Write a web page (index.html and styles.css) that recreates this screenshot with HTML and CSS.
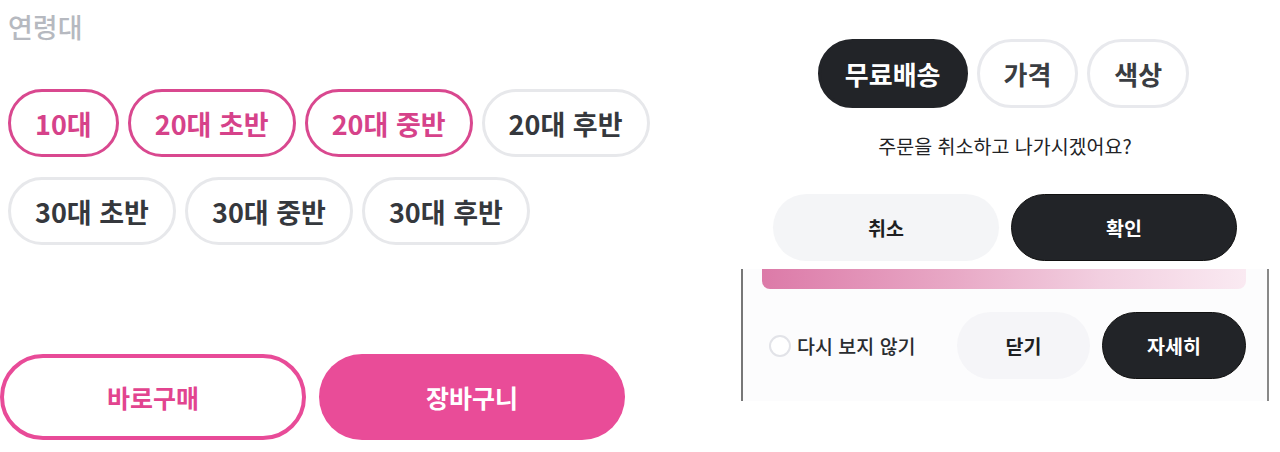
FILE: index.html
```html
<!DOCTYPE html>
<html lang="ko">
<head>
<meta charset="utf-8">
<title>UI</title>
<link rel="stylesheet" href="styles.css">
</head>
<body>
<div class="page">
  <section class="left">
    <div class="label">연령대</div>
    <div class="chip-row row1">
      <button class="chip on">10대</button>
      <button class="chip on">20대 초반</button>
      <button class="chip on">20대 중반</button>
      <button class="chip">20대 후반</button>
    </div>
    <div class="chip-row row2">
      <button class="chip">30대 초반</button>
      <button class="chip">30대 중반</button>
      <button class="chip">30대 후반</button>
    </div>
    <div class="actions">
      <button class="act outline">바로구매</button>
      <button class="act fill">장바구니</button>
    </div>
  </section>
  <section class="right">
    <div class="filters">
      <button class="fchip dark">무료배송</button>
      <button class="fchip">가격</button>
      <button class="fchip">색상</button>
    </div>
    <p class="question">주문을 취소하고 나가시겠어요?</p>
    <div class="confirm">
      <button class="cbtn light">취소</button>
      <button class="cbtn dark">확인</button>
    </div>
    <div class="frame">
      <div class="bar"></div>
      <div class="popup-row">
        <label class="check"><span class="radio"></span>다시 보지 않기</label>
        <div class="popup-btns">
          <button class="pbtn light">닫기</button>
          <button class="pbtn dark">자세히</button>
        </div>
      </div>
    </div>
  </section>
</div>
</body>
</html>
```
FILE: styles.css
```css
* { box-sizing: border-box; }
html, body { margin: 0; padding: 0; background: #ffffff; }
body { font-family: "Noto Sans CJK KR", "Noto Sans", sans-serif; }
button { font-family: inherit; cursor: pointer; margin: 0; }

.page { display: flex; width: 1280px; height: 452px; }

.left { width: 660px; flex: none; }
.label {
  margin: 11px 0 0 8px;
  font-size: 27px; line-height: 32px; font-weight: 500;
  color: #b6b9c0;
}
.chip-row { display: flex; gap: 9px; padding-left: 8px; }
.row1 { margin-top: 46px; }
.row2 { margin-top: 20px; }
.chip {
  height: 68px; padding: 0 24px;
  border-radius: 34px;
  border: 3px solid #e7e8eb; background: #fff;
  font-size: 27px; font-weight: 600; color: #35383d;
  line-height: 1;
}
.chip.on { border-color: #d9488f; color: #d6428a; }

.actions { display: flex; gap: 13px; margin-top: 109px; }
.act {
  width: 306px; height: 86px; border-radius: 43px;
  font-size: 25px; font-weight: 700; line-height: 1;
}
.act.outline { background: #fff; border: 4px solid #e84b98; color: #e2448f; }
.act.fill { background: #e94c98; border: none; color: #fff; }

.right {
  width: 528px; margin-left: 81px; flex: none;
  display: flex; flex-direction: column; align-items: center;
}
.filters { display: flex; gap: 9px; margin-top: 39px; margin-left: -3px; }
.fchip {
  height: 69px; padding: 0 24px; border-radius: 35px;
  border: 3px solid #e8e9ed; background: #fff;
  font-size: 26px; font-weight: 700; color: #3a3d42; line-height: 1;
}
.fchip.dark { background: #222428; border-color: #222428; color: #fff; }

.question {
  margin: 23px 0 0 0;
  font-size: 19.5px; line-height: 30px; color: #222326; font-weight: 400;
}
.confirm { display: flex; gap: 12px; margin-top: 33px; }
.cbtn {
  width: 226px; height: 67px; border-radius: 34px;
  font-size: 19.5px; font-weight: 700; line-height: 1;
}
.cbtn.light { background: #f4f5f7; border: none; color: #1e1f22; }
.cbtn.dark { background: #222428; border: 1px solid #111; color: #fff; }

.frame {
  align-self: stretch; margin-top: 8px; height: 132px;
  border-left: 2px solid #777; border-right: 2px solid #888;
  background: #fcfcfd;
}
.bar {
  height: 20px; margin: 0 21px 0 19px;
  border-radius: 0 0 8px 8px;
  background: linear-gradient(90deg, #dc7aa8 0%, #e8a9c6 40%, #f2cfe0 70%, #faeaf2 100%);
}
.popup-row {
  display: flex; align-items: center; justify-content: space-between;
  margin-top: 23px; padding: 0 21px 0 26px;
}
.check {
  display: flex; align-items: center; gap: 6px;
  font-size: 19.5px; font-weight: 500; color: #2a2c30;
}
.radio {
  width: 22px; height: 22px; border-radius: 50%;
  border: 2px solid #e2e3e8; background: #fff;
}
.popup-btns { display: flex; gap: 12px; }
.pbtn {
  height: 67px; border-radius: 34px;
  font-size: 19.5px; font-weight: 700; line-height: 1;
}
.pbtn.light { width: 133px; background: #f5f5f8; border: none; color: #1e1f22; }
.pbtn.dark { width: 144px; background: #222428; border: 1px solid #111; color: #fff; }
```
